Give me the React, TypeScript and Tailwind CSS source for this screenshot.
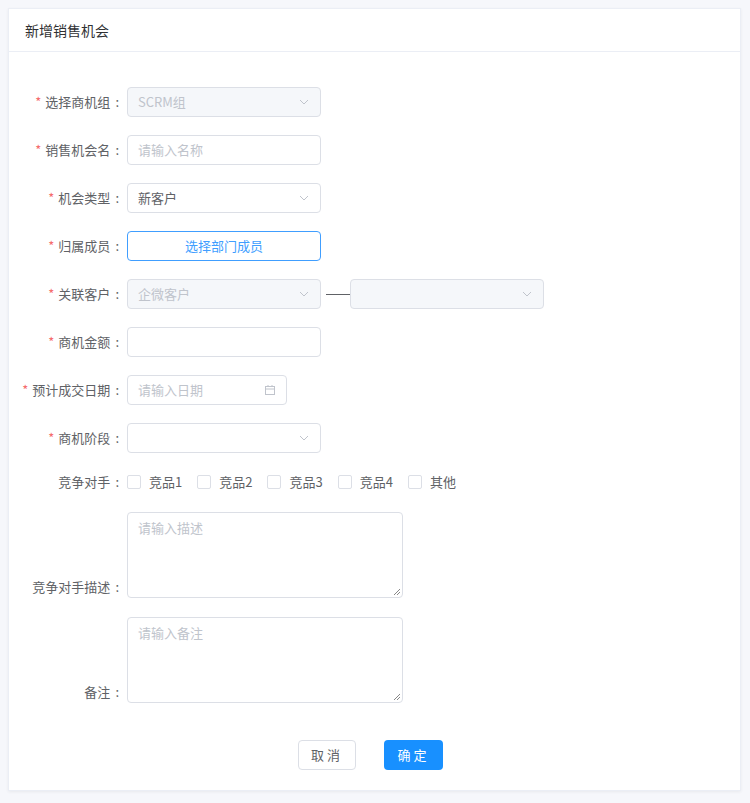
import React from "react";

const F = { fontFamily: '"Noto Sans CJK SC", "Noto Sans", sans-serif' };

const Chevron = () => (
  <svg width="12" height="12" viewBox="0 0 12 12" className="shrink-0">
    <path d="M2 4 L6 8 L10 4" fill="none" stroke="#c0c4cc" strokeWidth="1" />
  </svg>
);

function Label({ text, req = true, bottom = false }: { text: string; req?: boolean; bottom?: boolean }) {
  return (
    <div className={`w-[112px] mr-[6px] shrink-0 flex justify-end text-[13px] text-[#606266] ${bottom ? "self-end pb-[2px]" : ""}`}>
      {req && <span className="text-[#f56c6c] mr-[4px]">*</span>}
      <span>{text}</span>
      <span className="ml-[5px] mr-[2px]">:</span>
    </div>
  );
}

function Select({ text, disabled = false, placeholder = false, w = "w-[194px]" }: { text?: string; disabled?: boolean; placeholder?: boolean; w?: string }) {
  return (
    <div className={`${w} h-[30px] rounded-[4px] border border-[#dcdfe6] flex items-center justify-between pl-[10px] pr-[10px] text-[13px] ${disabled ? "bg-[#f5f7fa] text-[#c0c4cc]" : "bg-white text-[#606266]"} ${placeholder ? "text-[#c0c4cc]" : ""}`}>
      <span>{text}</span>
      <Chevron />
    </div>
  );
}

function Input({ ph, w = "w-[194px]", icon = false }: { ph?: string; w?: string; icon?: boolean }) {
  return (
    <div className={`${w} h-[30px] rounded-[4px] border border-[#dcdfe6] bg-white flex items-center justify-between pl-[10px] pr-[10px] text-[13px] text-[#c0c4cc]`}>
      <span>{ph}</span>
      {icon && (
        <svg width="12" height="12" viewBox="0 0 12 12">
          <rect x="1.5" y="2.5" width="9" height="8" fill="none" stroke="#c0c4cc" />
          <line x1="1.5" y1="5" x2="10.5" y2="5" stroke="#c0c4cc" />
          <line x1="4" y1="1" x2="4" y2="3" stroke="#c0c4cc" />
          <line x1="8" y1="1" x2="8" y2="3" stroke="#c0c4cc" />
        </svg>
      )}
    </div>
  );
}

function Row({ children, h = "h-[48px]" }: { children: React.ReactNode; h?: string }) {
  return <div className={`flex items-center ${h}`}>{children}</div>;
}

function Textarea({ ph }: { ph: string }) {
  return (
    <div className="relative w-[276px] h-[86px] rounded-[4px] border border-[#dcdfe6] bg-white px-[10px] pt-[5px] text-[13px] text-[#c0c4cc]">
      {ph}
      <svg width="8" height="8" viewBox="0 0 8 8" className="absolute right-[1px] bottom-[1px]">
        <line x1="1" y1="7" x2="7" y2="1" stroke="#888" />
        <line x1="4" y1="7" x2="7" y2="4" stroke="#888" />
      </svg>
    </div>
  );
}

export default function App() {
  return (
    <div className="w-[750px] h-[803px] bg-[#f6f7fb] pt-[8px] pl-[8px]" style={F}>
      <div className="w-[733px] h-[783px] bg-white border border-[#ebeef5] shadow-[0_1px_3px_rgba(0,0,0,0.06)] flex flex-col">
        <div className="h-[43px] border-b border-[#ebeef5] flex items-center pl-[16px] text-[14px] text-[#303133]">新增销售机会</div>
        <div className="pt-[26px] flex flex-col">
          <Row><Label text="选择商机组" /><Select text="SCRM组" disabled /></Row>
          <Row><Label text="销售机会名" /><Input ph="请输入名称" /></Row>
          <Row><Label text="机会类型" /><Select text="新客户" /></Row>
          <Row>
            <Label text="归属成员" />
            <div className="w-[194px] h-[30px] rounded-[4px] border border-[#409eff] flex items-center justify-center text-[13px] text-[#409eff]">选择部门成员</div>
          </Row>
          <Row>
            <Label text="关联客户" />
            <Select text="企微客户" disabled />
            <div className="w-[24px] h-px bg-[#606266] ml-[5px]" />
            <Select disabled w="w-[194px]" />
          </Row>
          <Row><Label text="商机金额" /><Input /></Row>
          <Row><Label text="预计成交日期" /><Input ph="请输入日期" w="w-[160px]" icon /></Row>
          <Row><Label text="商机阶段" /><Select /></Row>
          <Row h="h-[40px]">
            <Label text="竞争对手" req={false} />
            <div className="flex items-center text-[13px] text-[#606266]">
              {["竞品1", "竞品2", "竞品3", "竞品4", "其他"].map((t) => (
                <label key={t} className="flex items-center mr-[15px]">
                  <span className="w-[14px] h-[14px] border border-[#dcdfe6] rounded-[2px] bg-white mr-[8px]" />
                  {t}
                </label>
              ))}
            </div>
          </Row>
          <div className="flex mt-[10px]"><Label text="竞争对手描述" req={false} bottom /><Textarea ph="请输入描述" /></div>
          <div className="flex mt-[19px]"><Label text="备注" req={false} bottom /><Textarea ph="请输入备注" /></div>
          <div className="flex justify-center gap-[28px] mt-[37px] mr-[8px]">
            <button className="w-[58px] h-[30px] rounded-[4px] border border-[#dcdfe6] bg-white text-[13px] text-[#606266] tracking-[3px]">取消</button>
            <button className="w-[59px] h-[30px] rounded-[4px] bg-[#1890ff] text-[13px] text-white tracking-[3px]">确定</button>
          </div>
        </div>
      </div>
    </div>
  );
}
